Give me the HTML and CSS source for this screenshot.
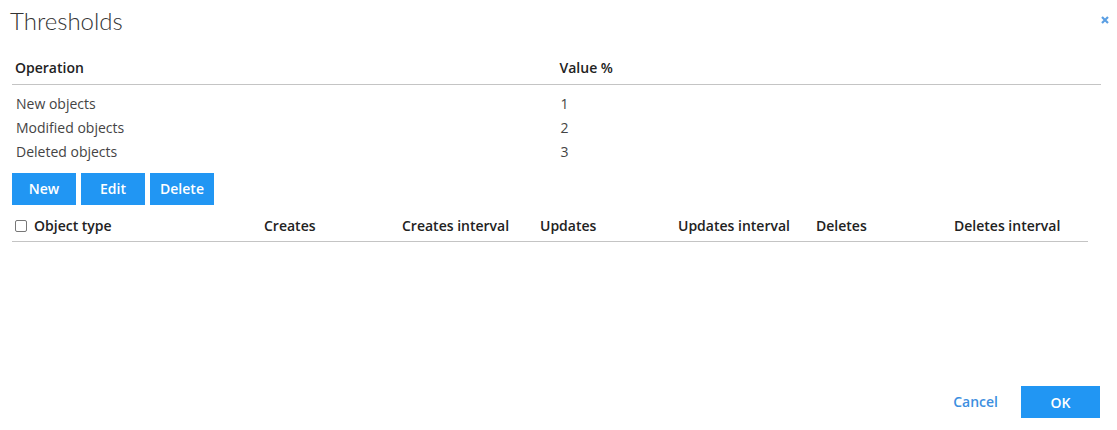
FILE: index.html
```html
<!DOCTYPE html>
<html>
<head>
<meta charset="utf-8">
<link rel="stylesheet" href="styles.css">
</head>
<body>
<div class="dialog">
  <div class="head">
    <h1 class="title">Thresholds</h1>
    <span class="close"><svg width="8" height="8" viewBox="0 0 8 8"><path d="M1 1L7 7M7 1L1 7" stroke="#5b9fe3" stroke-width="2.2" stroke-linecap="butt"/></svg></span>
  </div>
  <div class="ops">
    <div class="ops-row ops-head"><div class="cell">Operation</div><div class="cell">Value %</div></div>
    <div class="ops-body">
      <div class="ops-row"><div class="cell">New objects</div><div class="cell">1</div></div>
      <div class="ops-row"><div class="cell">Modified objects</div><div class="cell">2</div></div>
      <div class="ops-row"><div class="cell">Deleted objects</div><div class="cell">3</div></div>
    </div>
  </div>
  <div class="actions">
    <button class="btn">New</button>
    <button class="btn">Edit</button>
    <button class="btn">Delete</button>
  </div>
  <div class="types">
    <div class="types-head">
      <div class="cell first"><span class="check"></span>Object type</div>
      <div class="cell">Creates</div>
      <div class="cell">Creates interval</div>
      <div class="cell">Updates</div>
      <div class="cell">Updates interval</div>
      <div class="cell">Deletes</div>
      <div class="cell">Deletes interval</div>
    </div>
  </div>
  <div class="footer">
    <button class="link">Cancel</button>
    <button class="btn ok">OK</button>
  </div>
</div>
</body>
</html>
```
FILE: styles.css
```css
html, body {
  margin: 0;
  padding: 0;
  background: #fff;
}
.dialog {
  box-sizing: border-box;
  height: 430px;
  padding: 0 17px 12px 12px;
  display: flex;
  flex-direction: column;
  font-family: "Open Sans", "Liberation Sans", sans-serif;
  font-size: 14px;
  color: #444;
}
.head {
  display: flex;
  justify-content: space-between;
  align-items: flex-start;
  height: 50px;
  margin-right: -9px;
}
.title {
  margin: 6px 0 0 -2px;
  font-family: Lato, "Open Sans", sans-serif;
  font-weight: 300;
  font-size: 24px;
  line-height: 29px;
  color: #333;
}
.close {
  margin-top: 16px;
  display: block;
  width: 8px;
  height: 8px;
}
.close svg { display: block; }
.ops {
  width: 1089px;
}
.ops-row {
  display: grid;
  grid-template-columns: 1fr 1fr;
  height: 24.3px;
  align-items: center;
}
.ops-head {
  height: 34px;
  border-bottom: 1px solid #c4c4c4;
  font-weight: 600;
  color: #222;
  align-items: center;
}
.ops-body {
  padding-top: 6px;
}
.cell {
  padding-left: 3px;
  white-space: nowrap;
}
.ops-body .cell { padding-left: 4px; }
.actions {
  display: flex;
  gap: 5px;
  margin-top: 9px;
}
.btn {
  width: 64px;
  height: 32px;
  border: none;
  padding: 0;
  background: #2196f3;
  color: #fff;
  font-family: "Open Sans", "Liberation Sans", sans-serif;
  font-weight: 600;
  font-size: 14px;
}
.types {
  width: 1076px;
  margin-top: 6px;
}
.types-head {
  display: grid;
  grid-template-columns: 249px repeat(5, 138px) 1fr;
  height: 30px;
  align-items: center;
  border-bottom: 1px solid #c4c4c4;
  font-weight: 600;
  color: #222;
}
.types-head .first {
  display: flex;
  align-items: center;
}
.check {
  box-sizing: border-box;
  width: 12px;
  height: 12px;
  border: 1px solid #777;
  border-radius: 2px;
  margin-right: 7px;
  background: #fff;
}
.footer {
  margin-top: auto;
  display: flex;
  justify-content: flex-end;
  align-items: center;
  gap: 23px;
}
.link {
  border: none;
  background: none;
  padding: 0 0 2px 0;
  color: #3d8fe0;
  font-family: "Open Sans", "Liberation Sans", sans-serif;
  font-weight: 600;
  font-size: 14px;
}
.ok {
  width: 79px;
}
```
